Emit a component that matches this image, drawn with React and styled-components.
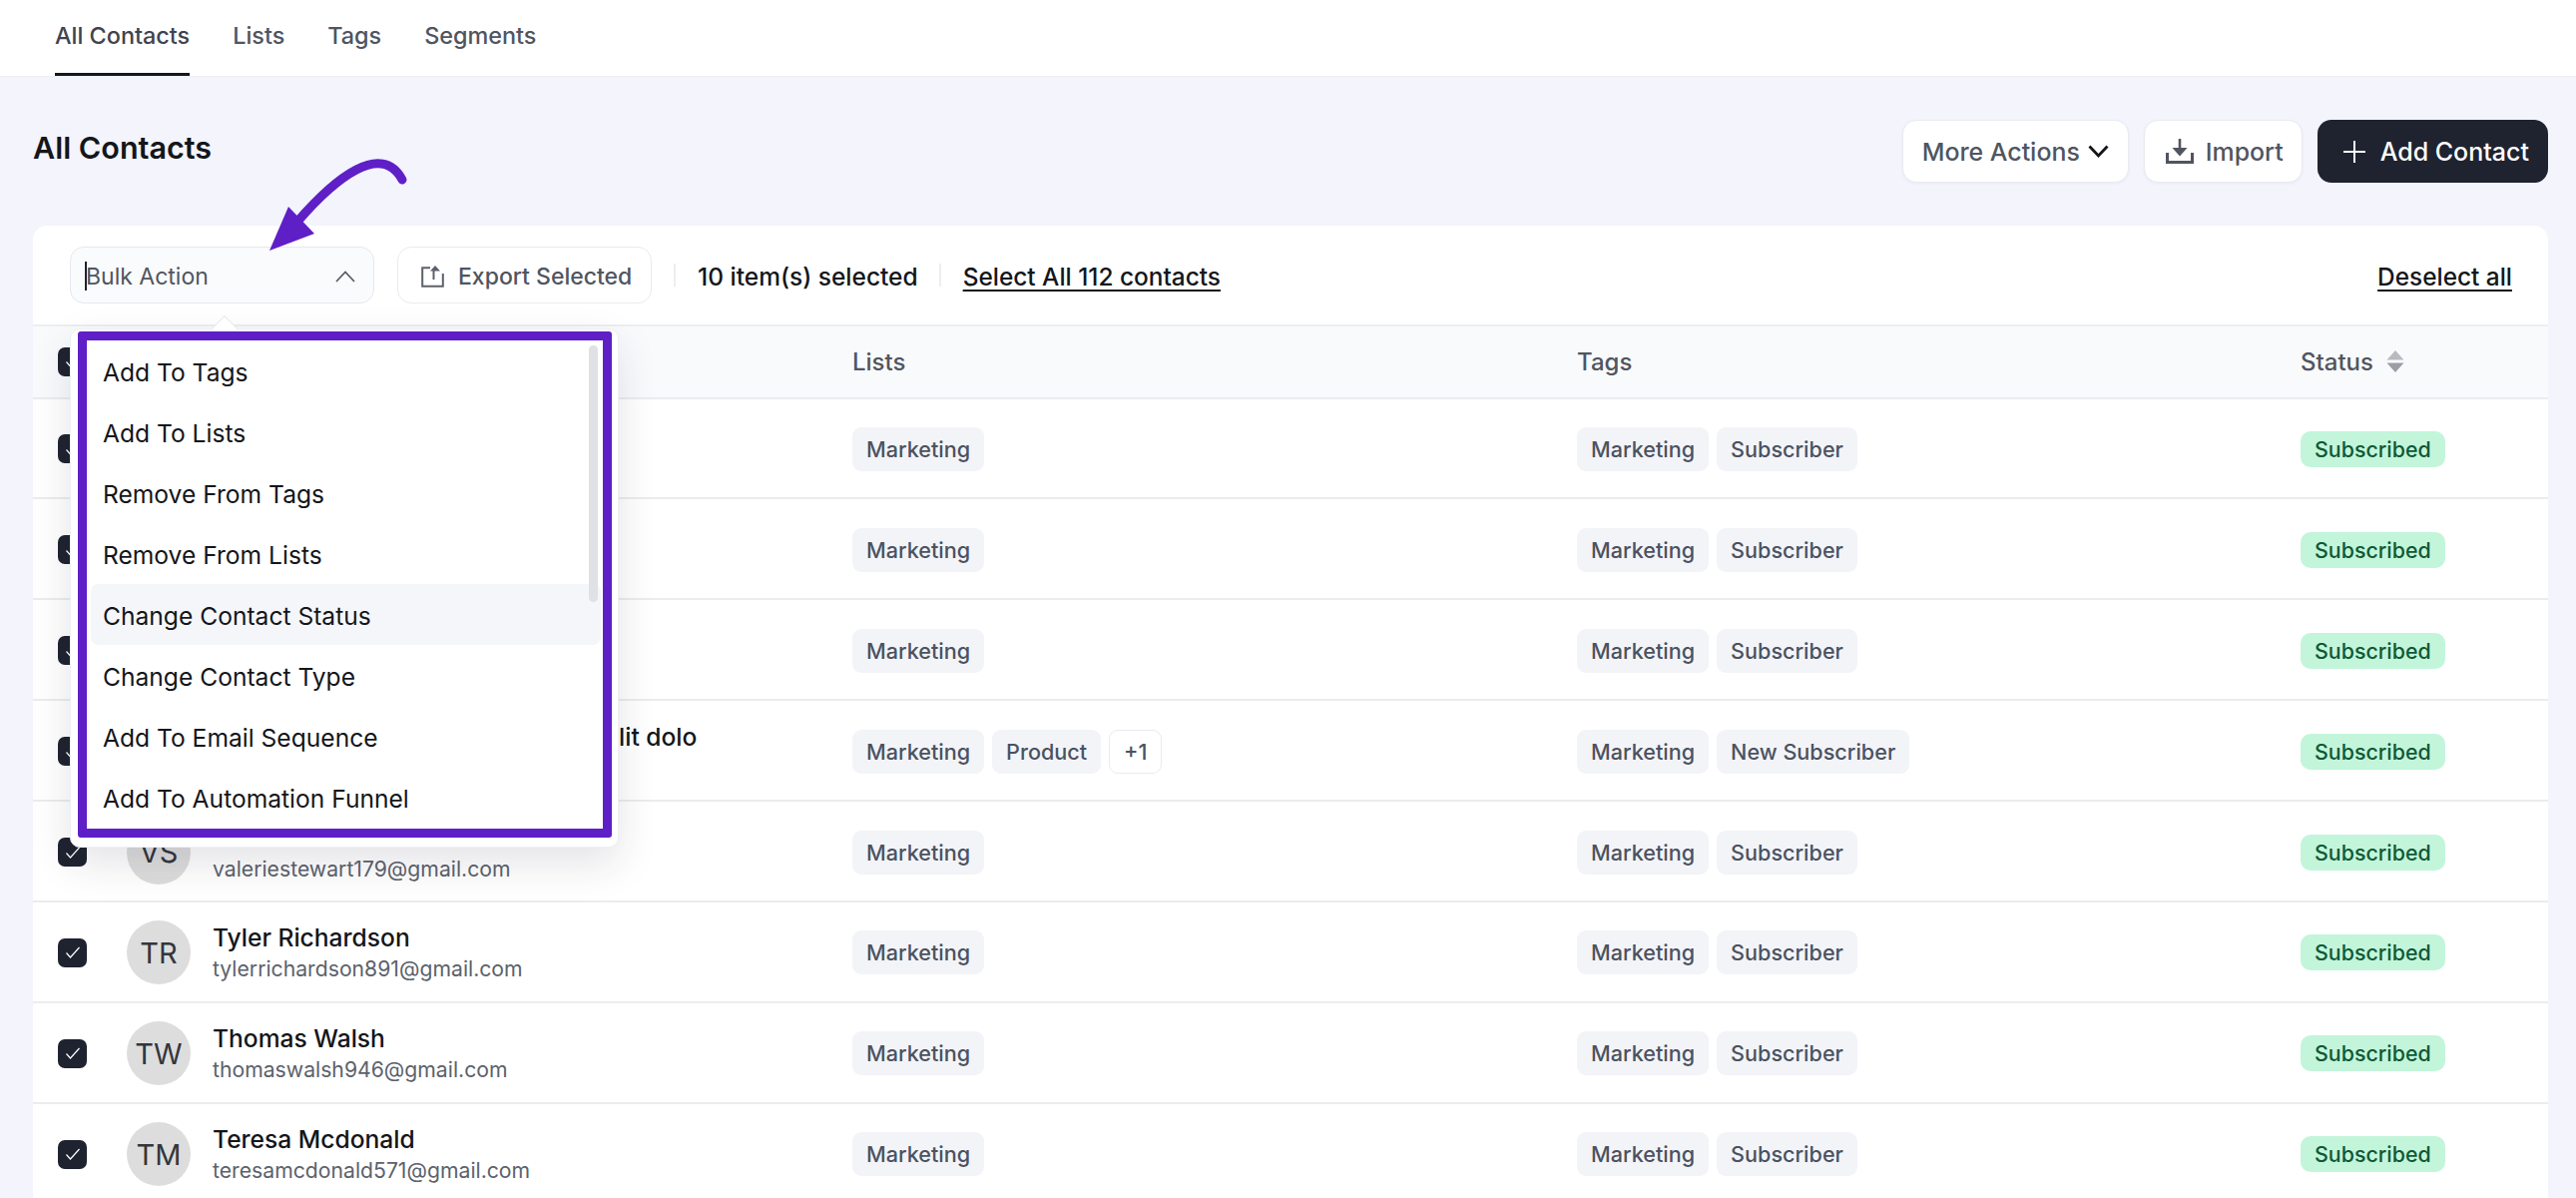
import React from "react";
import styled, { createGlobalStyle } from "styled-components";

const tabs = ["All Contacts", "Lists", "Tags", "Segments"];

const bulkActions = [
  "Add To Tags",
  "Add To Lists",
  "Remove From Tags",
  "Remove From Lists",
  "Change Contact Status",
  "Change Contact Type",
  "Add To Email Sequence",
  "Add To Automation Funnel",
];

const contacts = [
  { initials: "JM", name: "Jason Morgan", email: "jasonmorgan204@gmail.com", lists: ["Marketing"], tags: ["Marketing", "Subscriber"] },
  { initials: "AP", name: "Amber Pierce", email: "amberpierce318@gmail.com", lists: ["Marketing"], tags: ["Marketing", "Subscriber"] },
  { initials: "CB", name: "Craig Bennett", email: "craigbennett642@gmail.com", lists: ["Marketing"], tags: ["Marketing", "Subscriber"] },
  { initials: "SU", name: "Sed Ut Perspiciatis Unde Omnis velit dolo", email: "sedut@gmail.com", lists: ["Marketing", "Product"], more: "+1", tags: ["Marketing", "New Subscriber"] },
  { initials: "VS", name: "Valerie Stewart", email: "valeriestewart179@gmail.com", lists: ["Marketing"], tags: ["Marketing", "Subscriber"] },
  { initials: "TR", name: "Tyler Richardson", email: "tylerrichardson891@gmail.com", lists: ["Marketing"], tags: ["Marketing", "Subscriber"] },
  { initials: "TW", name: "Thomas Walsh", email: "thomaswalsh946@gmail.com", lists: ["Marketing"], tags: ["Marketing", "Subscriber"] },
  { initials: "TM", name: "Teresa Mcdonald", email: "teresamcdonald571@gmail.com", lists: ["Marketing"], tags: ["Marketing", "Subscriber"] },
];

const GlobalStyle = createGlobalStyle`
  html, body {
    margin: 0;
    height: 1200px;
    overflow: hidden;
    background: #f3f4fc;
    font-family: Inter, "Liberation Sans", sans-serif;
    color: #14161a;
  }
  * {
    box-sizing: border-box;
  }
`;

const TabBar = styled.nav`
  display: flex;
  gap: 43px;
  height: 77px;
  padding-left: 55px;
  background: #fff;
  border-bottom: 1px solid #eceef2;
`;

const Tab = styled.a`
  height: 76px;
  padding-bottom: 3px;
  display: flex;
  align-items: center;
  font-size: 23.4px;
  font-weight: 500;
  color: ${(props) => (props.active ? "#3f444d" : "#50555f")};
  border-bottom: 3px solid ${(props) => (props.active ? "#14161f" : "transparent")};
`;

const Main = styled.main`
  padding: 43px 28px 0 33px;
`;

const PageHead = styled.header`
  display: flex;
  justify-content: space-between;
  height: 63px;
  margin-bottom: 43px;
`;

const Title = styled.h1`
  margin: 0;
  font-size: 30.5px;
  line-height: 55px;
  font-weight: 600;
`;

const Actions = styled.div`
  display: flex;
  gap: 15px;
`;

const Button = styled.button`
  height: 63px;
  padding: ${(props) => props.pad || "0 19px"};
  display: flex;
  align-items: center;
  gap: ${(props) => props.gap || 11}px;
  font: 500 ${(props) => (props.dark ? 25 : 24.9)}px Inter, sans-serif;
  color: ${(props) => (props.dark ? "#fff" : "#50555f")};
  background: ${(props) => (props.dark ? "#1f2330" : "#fff")};
  border: ${(props) => (props.dark ? "none" : "1.5px solid #e9ebf0")};
  border-radius: 14px;
  box-shadow: ${(props) => (props.dark ? "none" : "0 1px 3px rgba(30, 35, 60, 0.05)")};
`;

const Card = styled.section`
  background: #fff;
  border-radius: 14px 14px 0 0;
`;

const Toolbar = styled.div`
  display: flex;
  align-items: center;
  height: 101px;
  padding: 0 36px 0 37px;
  border-bottom: 2px solid #eceef1;
`;

const BulkWrap = styled.div`
  position: relative;
  margin-right: 23px;
`;

const BulkSelect = styled.div`
  width: 305px;
  height: 57px;
  padding: 2px 18px 0 14px;
  display: flex;
  align-items: center;
  font-size: 23px;
  color: #50555f;
  background: #fafbfd;
  border: 1.5px solid #e6e8ed;
  border-radius: 14px;
`;

const Caret = styled.span`
  width: 2px;
  height: 29px;
  margin-right: -1px;
  background: #1f2330;
`;

const SelectLabel = styled.span`
  flex: 1;
`;

const ExportButton = styled.button`
  width: 255px;
  height: 57px;
  padding: 2px 0 0 23px;
  display: flex;
  align-items: center;
  gap: 14px;
  font: 500 23px Inter, sans-serif;
  color: #50555f;
  background: #fff;
  border: 1.5px solid #e9ebf0;
  border-radius: 14px;
`;

const Divider = styled.span`
  width: 2px;
  height: 23px;
  margin: 0 22px;
  background: #eceef1;
`;

const SelectedCount = styled.span`
  padding-top: 2px;
  margin-right: -1px;
  font-size: 24.5px;
  font-weight: 500;
`;

const TextLink = styled.a`
  padding-top: 2px;
  font-size: 24.4px;
  font-weight: 500;
  text-decoration: underline;
  text-decoration-thickness: 2px;
  text-underline-offset: 4px;
  margin-left: ${(props) => (props.push ? "auto" : "0")};
`;

const Annotation = styled.svg`
  position: absolute;
  left: 190px;
  top: -93px;
  z-index: 5;
`;

const Popper = styled.div`
  position: absolute;
  left: 0;
  top: 82px;
  z-index: 4;
  width: 550px;
  height: 520px;
  padding: 2px 6px 0 7px;
  background: #fff;
  border: 1px solid #eef0f3;
  border-radius: 10px;
  box-shadow: 0 16px 40px rgba(30, 35, 60, 0.12);

  &::before {
    content: "";
    position: absolute;
    left: 144px;
    top: -10px;
    width: 19px;
    height: 19px;
    background: #fff;
    border-top: 1px solid #e6e8ed;
    border-left: 1px solid #e6e8ed;
    transform: rotate(45deg);
  }
`;

const Frame = styled.div`
  position: relative;
  height: 507px;
  padding: 0 2px 0 4px;
  background: #fff;
  border: 9px solid #5f1fc7;
  border-radius: 3px;
`;

const MenuItem = styled.div`
  height: 61px;
  padding: 2px 0 0 12px;
  display: flex;
  align-items: center;
  font-size: 24.6px;
  color: #14161a;
  border-radius: 8px;
  background: ${(props) => (props.active ? "#f5f6fa" : "transparent")};
`;

const ScrollThumb = styled.span`
  position: absolute;
  right: 5px;
  top: 5px;
  width: 9px;
  height: 257px;
  border-radius: 5px;
  background: #dfe1e4;
`;

const Row = styled.div`
  display: grid;
  grid-template-columns: 94px 727px 726px 725px 1fr;
  align-items: center;
  height: ${(props) => (props.head ? "72.5px" : "100.9px")};
  padding-top: ${(props) => (props.head ? "0" : "2px")};
  background: ${(props) => (props.head ? "#f9fafc" : "#fff")};
  border-bottom: 2px solid #eaecef;
`;

const HeadCell = styled.div`
  display: flex;
  align-items: center;
  gap: 13px;
  font-size: 24px;
  font-weight: 500;
  color: #50555f;
`;

const CheckCell = styled.div`
  padding-left: 25px;
`;

const Checkbox = styled.span`
  width: 29px;
  height: 29px;
  display: flex;
  align-items: center;
  justify-content: center;
  background: #1f2330;
  border-radius: 7px;
`;

const Person = styled.div`
  display: flex;
  align-items: center;
  gap: 22px;
`;

const Avatar = styled.span`
  flex: none;
  width: 64px;
  height: 64px;
  display: flex;
  align-items: center;
  justify-content: center;
  font-size: 29px;
  color: #33363b;
  background: #dddddd;
  border-radius: 50%;
`;

const PersonText = styled.div`
  display: flex;
  flex-direction: column;
  gap: 4px;
`;

const Name = styled.span`
  font-size: 24.6px;
  font-weight: 500;
  line-height: 29px;
  white-space: nowrap;
`;

const Email = styled.span`
  font-size: 21.2px;
  line-height: 25px;
  color: #5c626c;
`;

const TagRow = styled.div`
  display: flex;
  align-items: center;
  gap: 8px;
`;

const Tag = styled.span`
  height: 44px;
  padding: 0 14px;
  display: flex;
  align-items: center;
  font-size: 21.6px;
  font-weight: 500;
  color: #4b5261;
  background: ${(props) => (props.outline ? "#fff" : "#f3f4f8")};
  border: ${(props) => (props.outline ? "1.5px solid #e9ebf0" : "none")};
  border-radius: 9px;
`;

const Status = styled.span`
  display: inline-flex;
  align-items: center;
  height: 36px;
  padding: 0 14px;
  font-size: 21.4px;
  font-weight: 500;
  color: #0e5a36;
  background: #c3f5db;
  border-radius: 10px;
`;

const ArrowMark = () => (
  <Annotation width="160" height="105" viewBox="0 0 160 105">
    <path
      d="M143 26C133 7 116 6 97 16C76 27 57 46 38 68"
      fill="none"
      stroke="#5f1fc7"
      strokeWidth="9"
      strokeLinecap="round"
    />
    <polygon points="29,53 55,80 10,97" fill="#5f1fc7" />
  </Annotation>
);

const CheckMark = () => (
  <svg width="16" height="14" viewBox="0 0 16 14">
    <polyline points="1.5,7.5 5.5,12 14.5,2" fill="none" stroke="#fff" strokeWidth="1.2" />
  </svg>
);

const ChevronUp = () => (
  <svg width="20" height="12" viewBox="0 0 20 12">
    <polyline points="1,11 10,1.5 19,11" fill="none" stroke="#555a62" strokeWidth="1.7" />
  </svg>
);

const ExportIcon = () => (
  <svg width="23" height="22" viewBox="0 0 23 22">
    <path d="M9 2.2H1.2V20.8H21.8V8" fill="none" stroke="#5c616b" strokeWidth="2" />
    <path d="M12.5 14V5" fill="none" stroke="#5c616b" strokeWidth="2" />
    <polygon points="14,0 19,5.5 9,5.5" fill="#5c616b" />
  </svg>
);

const ImportIcon = () => (
  <svg width="28" height="25" viewBox="0 0 28 25">
    <path d="M1.5 14V23.5H26.5V14" fill="none" stroke="#50555f" strokeWidth="3" />
    <path d="M14 0V11" fill="none" stroke="#50555f" strokeWidth="2.6" />
    <polygon points="6.5,9 21.5,9 14,17.5" fill="#50555f" />
  </svg>
);

const PlusIcon = () => (
  <svg width="22" height="22" viewBox="0 0 22 22">
    <path d="M11 0V22M0 11H22" stroke="#fff" strokeWidth="2" />
  </svg>
);

const ChevronDown = () => (
  <svg width="21" height="13" viewBox="0 0 21 13">
    <polyline points="1.5,1.5 10.5,11 19.5,1.5" fill="none" stroke="#14161a" strokeWidth="2.8" />
  </svg>
);

const SortIcon = () => (
  <svg width="18" height="22" viewBox="0 0 18 22">
    <polygon points="9,0 17.5,9.5 0.5,9.5" fill="#b7bac0" />
    <polygon points="0.5,12.5 17.5,12.5 9,22" fill="#9b9ea6" />
  </svg>
);

const ContactRow = ({ contact }) => (
  <Row>
    <CheckCell>
      <Checkbox>
        <CheckMark />
      </Checkbox>
    </CheckCell>
    <Person>
      <Avatar>{contact.initials}</Avatar>
      <PersonText>
        <Name>{contact.name}</Name>
        <Email>{contact.email}</Email>
      </PersonText>
    </Person>
    <TagRow>
      {contact.lists.map((list) => (
        <Tag key={list}>{list}</Tag>
      ))}
      {contact.more ? <Tag outline>{contact.more}</Tag> : ""}
    </TagRow>
    <TagRow>
      {contact.tags.map((tag) => (
        <Tag key={tag}>{tag}</Tag>
      ))}
    </TagRow>
    <div>
      <Status>Subscribed</Status>
    </div>
  </Row>
);

const App = () => {
  return (
    <>
      <GlobalStyle />
      <TabBar>
        {tabs.map((tab, i) => (
          <Tab key={tab} active={i === 0}>
            {tab}
          </Tab>
        ))}
      </TabBar>
      <Main>
        <PageHead>
          <Title>All Contacts</Title>
          <Actions>
            <Button gap={8}>
              More Actions
              <ChevronDown />
            </Button>
            <Button gap={12} pad="0 18px 0 21px">
              <ImportIcon />
              Import
            </Button>
            <Button dark pad="0 19px 0 26px" gap={15}>
              <PlusIcon />
              Add Contact
            </Button>
          </Actions>
        </PageHead>
        <Card>
          <Toolbar>
            <BulkWrap>
              <BulkSelect>
                <Caret />
                <SelectLabel>Bulk Action</SelectLabel>
                <ChevronUp />
              </BulkSelect>
              <ArrowMark />
              <Popper>
                <Frame>
                  {bulkActions.map((action, i) => (
                    <MenuItem key={action} active={i === 4}>
                      {action}
                    </MenuItem>
                  ))}
                  <ScrollThumb />
                </Frame>
              </Popper>
            </BulkWrap>
            <ExportButton>
              <ExportIcon />
              Export Selected
            </ExportButton>
            <Divider />
            <SelectedCount>10 item(s) selected</SelectedCount>
            <Divider />
            <TextLink>Select All 112 contacts</TextLink>
            <TextLink push>Deselect all</TextLink>
          </Toolbar>
          <Row head>
            <CheckCell>
              <Checkbox>
                <CheckMark />
              </Checkbox>
            </CheckCell>
            <HeadCell>Contact</HeadCell>
            <HeadCell>Lists</HeadCell>
            <HeadCell>Tags</HeadCell>
            <HeadCell>
              Status
              <SortIcon />
            </HeadCell>
          </Row>
          {contacts.map((contact) => (
            <ContactRow key={contact.email} contact={contact} />
          ))}
        </Card>
      </Main>
    </>
  );
};

export default App;
